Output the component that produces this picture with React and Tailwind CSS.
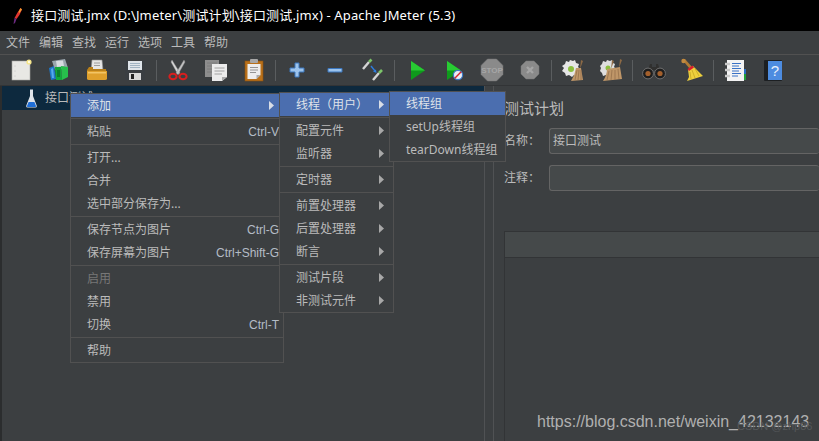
import React from "react";

const mainMenu = ["文件", "编辑", "查找", "运行", "选项", "工具", "帮助"];

const contextItems = [
  { label: "添加", arrow: true, active: true },
  "sep",
  { label: "粘贴", key: "Ctrl-V" },
  "sep",
  { label: "打开..." },
  { label: "合并" },
  { label: "选中部分保存为..." },
  "sep",
  { label: "保存节点为图片", key: "Ctrl-G" },
  { label: "保存屏幕为图片", key: "Ctrl+Shift-G" },
  "sep",
  { label: "启用", disabled: true },
  { label: "禁用" },
  { label: "切换", key: "Ctrl-T" },
  "sep",
  { label: "帮助" },
];

const addItems = [
  { label: "线程（用户）", arrow: true, active: true },
  "sep",
  { label: "配置元件", arrow: true },
  { label: "监听器", arrow: true },
  "sep",
  { label: "定时器", arrow: true },
  "sep",
  { label: "前置处理器", arrow: true },
  { label: "后置处理器", arrow: true },
  { label: "断言", arrow: true },
  "sep",
  { label: "测试片段", arrow: true },
  { label: "非测试元件", arrow: true },
];

const threadItems = [
  { label: "线程组", active: true },
  { label: "setUp线程组" },
  { label: "tearDown线程组" },
];

function Arrow({ active }) {
  return (
    <svg width="5" height="9" viewBox="0 0 5 9" className="shrink-0">
      <path d="M0 0L5 4.5L0 9Z" fill={active ? "#d8dde6" : "#a8a8a8"} />
    </svg>
  );
}

function Menu({ items, className }) {
  return (
    <div className={`absolute flex flex-col border border-[#515151] bg-[#3c3f41] text-[12px] text-[#bbbbbb] ${className}`}>
      {items.map((item, i) =>
        item === "sep" ? (
          <div key={i} className="flex h-[3px] items-center">
            <div className="h-px w-full bg-[#515151]" />
          </div>
        ) : (
          <div
            key={i}
            className={`flex h-[23px] items-center justify-between pl-4 ${item.arrow ? "pr-[9px]" : "pr-[4px]"} ${item.active ? "bg-[#4b6eaf] text-[#dfe3ea]" : ""} ${item.disabled ? "text-[#777777]" : ""}`}
          >
            <span>{item.label}</span>
            {item.key && <span className="font-['Liberation_Sans',sans-serif] text-[#b4bcc6]">{item.key}</span>}
            {item.arrow && <Arrow active={item.active} />}
          </div>
        )
      )}
    </div>
  );
}

const icons = {
  file: (
    <>
      <rect x="3" y="3" width="18" height="19" fill="#e8e8e4" stroke="#a5a5a0" strokeWidth="0.6" />
      <circle cx="20" cy="4" r="2.6" fill="#f5e58a" />
      <circle cx="20" cy="4" r="1.2" fill="#fffde0" />
      <circle cx="6" cy="8" r="0.5" fill="#bbb" />
      <circle cx="6" cy="13" r="0.5" fill="#bbb" />
      <circle cx="6" cy="18" r="0.5" fill="#bbb" />
    </>
  ),
  template: (
    <>
      <path d="M5 3L18 1L21 10L8 12Z" fill="#9aa6ad" />
      <path d="M9 3L16 2.5L17 8L10 9Z" fill="#d7dcdf" />
      <path d="M2 10L7 8L9 21L4 22Z" fill="#1f78c8" />
      <path d="M4 11L6 10L7 20L5 20Z" fill="#55a9ea" />
      <path d="M8 9L14 9L15 22L9 22Z" fill="#11a83a" />
      <path d="M14 8L21 9L21 19L15 22Z" fill="#27c04c" />
      <path d="M10 12L13 12L13 19L10 19Z" fill="#0b7f2b" />
    </>
  ),
  open: (
    <>
      <path d="M7 2H17L18 12H6Z" fill="#e6e6e6" stroke="#8f8f8f" strokeWidth="0.6" />
      <path d="M9 5H15M9 7.5H15" stroke="#8a8a8a" strokeWidth="0.8" />
      <path d="M2 12L4 9H8V11H21L22 21H2Z" fill="#b9801a" />
      <path d="M2 13H22V20.5Q22 22 20 22H4Q2 22 2 20.5Z" fill="#dfa02c" />
      <path d="M3 14H21V15.5H3Z" fill="#f3c565" />
    </>
  ),
  save: (
    <>
      <path d="M2 3H21L22 4V22H2Z" fill="#3a3e42" />
      <rect x="5" y="3" width="14" height="9" fill="#dfe5ea" />
      <path d="M7 5.5H17M7 7.5H17M7 9.5H17" stroke="#8fa6b7" strokeWidth="0.8" />
      <rect x="6" y="15" width="12" height="7" fill="#d9d9d9" />
      <rect x="8" y="16" width="3" height="5" fill="#222" />
    </>
  ),
  cut: (
    <>
      <path d="M6 2L14 15L12 16.5L5 4Z" fill="#d5d5d5" stroke="#8a8a8a" strokeWidth="0.4" />
      <path d="M18 2L10 15L12 16.5L19 4Z" fill="#c2c2c2" stroke="#8a8a8a" strokeWidth="0.4" />
      <ellipse cx="7" cy="18.5" rx="3.6" ry="2.8" fill="none" stroke="#d81f1f" strokeWidth="2" />
      <ellipse cx="17" cy="18.5" rx="3.6" ry="2.8" fill="none" stroke="#d81f1f" strokeWidth="2" />
    </>
  ),
  copy: (
    <>
      <rect x="1" y="2" width="14" height="17" fill="#8d8d8d" />
      <path d="M3 5H13M3 8H13M3 11H13M3 14H13" stroke="#787878" strokeWidth="0.8" />
      <path d="M8 6H23V19L18 23H8Z" fill="#ececec" />
      <path d="M23 19L18 23V19Z" fill="#aaa" />
      <path d="M10.5 10H20.5M10.5 13H20.5M10.5 16H18" stroke="#9a9a9a" strokeWidth="0.9" />
    </>
  ),
  paste: (
    <>
      <rect x="3" y="3" width="18" height="20" fill="#b8701a" stroke="#8c5210" strokeWidth="0.6" />
      <rect x="8" y="1" width="8" height="4" rx="1" fill="#a8a8a8" />
      <path d="M5.5 6H18.5V17L14.5 21H5.5Z" fill="#ededed" />
      <path d="M18.5 17L14.5 21V17Z" fill="#aaa" />
      <path d="M8 9.5H16M8 12H16M8 14.5H14" stroke="#8a8a8a" strokeWidth="0.9" />
    </>
  ),
  plus: (
    <path d="M10 5H14V10H19V14H14V19H10V14H5V10H10Z" fill="#9cc3ec" stroke="#3b76bd" strokeWidth="1" />
  ),
  minus: <path d="M5 10.5H19V14H5Z" fill="#9cc3ec" stroke="#3b76bd" strokeWidth="1" />,
  toggle: (
    <>
      <path d="M2 11L8 4" stroke="#d4d4d4" strokeWidth="2.4" />
      <path d="M8 4L10.5 1.5" stroke="#7cc46a" strokeWidth="2.6" />
      <path d="M12 22L18 15" stroke="#d4d4d4" strokeWidth="2.4" />
      <path d="M18 15L21 12" stroke="#7cc46a" strokeWidth="2.6" />
      <path d="M10 8L14.5 13.5" stroke="#2d7de0" strokeWidth="1.4" />
      <path d="M15.5 15L12 13.5L15 11.5Z" fill="#2d7de0" />
    </>
  ),
  start: (
    <>
      <path d="M7 3L21 12.5L7 22Z" fill="#0f9a1c" />
      <path d="M7 3L21 12.5L7 12.5Z" fill="#28cc33" />
    </>
  ),
  startNoPause: (
    <>
      <path d="M5 3L19 12.5L5 22Z" fill="#0f9a1c" />
      <path d="M5 3L19 12.5L5 12.5Z" fill="#28cc33" />
      <circle cx="16" cy="17" r="4.6" fill="#e9eef5" stroke="#3a78c8" strokeWidth="1.2" />
      <path d="M12.8 20.2L19.2 13.8" stroke="#d8232a" strokeWidth="1.4" />
    </>
  ),
  stop: (
    <>
      <path d="M7.5 1H16.5L23 7.5V16.5L16.5 23H7.5L1 16.5V7.5Z" fill="#8a8a8a" stroke="#777" strokeWidth="0.5" />
      <text x="12" y="15" textAnchor="middle" fontSize="8" fontWeight="700" fontFamily="Liberation Sans, sans-serif" fill="#a6a6a6">STOP</text>
    </>
  ),
  shutdown: (
    <>
      <path d="M8 3H16L21 8V16L16 21H8L3 16V8Z" fill="#8a8a8a" stroke="#777" strokeWidth="0.5" />
      <path d="M9 9L15 15M15 9L9 15" stroke="#a5a5a5" strokeWidth="2.4" />
    </>
  ),
  clear: (
    <>
      <path d="M9 2L12 3L14 2L15 5L18 6L17 9L19 11L17 14L17 17H13L11 19L8 17L5 18L4 15L1 13L3 10L1 8L4 6L5 3L8 4Z" fill="#e6e6e6" />
      <circle cx="10" cy="11" r="3" fill="#8cbf3f" />
      <path d="M20 2L22 3L19 11Z" fill="#8d6a45" />
      <path d="M15 10L20 10L22 22L10 23Q14 17 15 10Z" fill="#bf9668" />
      <path d="M16 12L14 22M18 12L17 22M20 12L20 22" stroke="#8f6c47" strokeWidth="0.7" />
    </>
  ),
  clearAll: (
    <>
      <path d="M8 2L11 3L13 2L14 5L16 6L15 9L17 11L15 14L11 18L7 17L4 18L3 15L1 13L2 10L1 8L3 6L4 3L7 4Z" fill="#dedede" />
      <circle cx="9" cy="10" r="2.5" fill="#8cbf3f" />
      <path d="M13 2L15 3L12 11Z" fill="#8d6a45" />
      <path d="M21 1L23 2L20 10Z" fill="#8d6a45" />
      <path d="M8 11L21 9L23 21L4 23Q8 17 8 11Z" fill="#bf9668" />
      <path d="M10 13L8 22M13 12L12 22M16 12L16 22M19 11L20 21" stroke="#8f6c47" strokeWidth="0.7" />
    </>
  ),
  search: (
    <>
      <path d="M8 6H10V9H14V6H16L18 12H6Z" fill="#30302f" />
      <circle cx="6" cy="15.5" r="5.4" fill="#1e1e1e" stroke="#7d7d7d" strokeWidth="0.8" />
      <circle cx="18" cy="15.5" r="5.4" fill="#1e1e1e" stroke="#7d7d7d" strokeWidth="0.8" />
      <circle cx="6" cy="15.5" r="2.6" fill="#a4602c" />
      <circle cx="18" cy="15.5" r="2.6" fill="#a4602c" />
    </>
  ),
  reset: (
    <>
      <path d="M2 1.5L5 1L12 9L9.5 10.5Z" fill="#b07a35" />
      <circle cx="3.5" cy="3" r="2.2" fill="#c18a3f" />
      <path d="M8 11.5L13 8L23 18L7 23L9 19Z" fill="#edd03d" />
      <path d="M12 12L15 20M10 14L11 21M15 10.5L19 18" stroke="#bfa020" strokeWidth="0.7" />
      <path d="M7.5 11L12.5 7.5L14 9.5L9 13Z" fill="#d81e2c" />
    </>
  ),
  log: (
    <>
      <rect x="4" y="2" width="17" height="21" fill="#f3f3f3" />
      <rect x="21" y="11" width="2" height="5" fill="#2a6fc2" />
      <rect x="21" y="16" width="2" height="6" fill="#1ea03a" />
      <path d="M9 5.5H18M9 8H16M9 10.5H18M9 13H16M9 15.5H18M9 18H15" stroke="#3a72c6" strokeWidth="1" />
      <path d="M2 6H7M2 12H7M2 18H7" stroke="#c9c9c9" strokeWidth="2.4" />
    </>
  ),
  help: (
    <>
      <rect x="3" y="2" width="18" height="21" rx="1" fill="#1c1f22" />
      <rect x="7" y="3" width="14" height="19" fill="#4d8ce0" />
      <text x="14" y="18" textAnchor="middle" fontSize="15" fontFamily="Liberation Sans, sans-serif" fill="#e8f0fb">?</text>
    </>
  ),
};

const toolbar = [
  ["file", "template", "open", "save"],
  ["cut", "copy", "paste"],
  ["plus", "minus", "toggle"],
  ["start", "startNoPause", "stop", "shutdown"],
  ["clear", "clearAll"],
  ["search", "reset"],
  ["log", "help"],
];

function ToolIcon({ name }) {
  return (
    <div className="flex w-[38px] items-center justify-center">
      <svg width="24" height="24" viewBox="0 0 24 24">
        {icons[name]}
      </svg>
    </div>
  );
}

function Flask() {
  return (
    <svg width="11" height="19" viewBox="0 0 11 19" className="shrink-0">
      <path d="M4 .5H7V7L10.7 16.5Q11.2 18.5 9.5 18.5H1.5Q-.2 18.5 .3 16.5L4 7Z" fill="#dfe4ea" />
      <path d="M2.6 13H8.4L10 17Q10.3 18 9.2 18H1.8Q.7 18 1 17Z" fill="#1f6fd8" />
    </svg>
  );
}

function Pen() {
  return (
    <svg width="9" height="16" viewBox="0 0 9 16">
      <path d="M7.5 0L9 1.5Q7 7 3.5 11L1.5 10Q4 5 7.5 0Z" fill="#e0352f" />
      <path d="M7.5 0L9 1.5L6.5 5L5.5 4Z" fill="#f39a2e" />
      <path d="M1.5 10L3.5 11L2 15L.5 16Z" fill="#6b2a80" />
    </svg>
  );
}

export default function App() {
  return (
    <div className="relative flex h-[441px] w-[819px] flex-col overflow-hidden bg-[#3c3f41] font-['Noto_Sans','Noto_Sans_CJK_SC',sans-serif] text-[12px] text-[#bbbbbb]">
      {/* title bar */}
      <div className="flex h-[31px] shrink-0 items-center gap-[9px] bg-black pl-[13px] text-[13px] tracking-[0.15px] text-white">
        <Pen />
        <span>接口测试.jmx (D:\Jmeter\测试计划\接口测试.jmx) - Apache JMeter (5.3)</span>
      </div>

      {/* menu bar */}
      <div className="flex h-[24px] shrink-0 items-center gap-[9px] border-b border-[#515151] pl-[6px]">
        {mainMenu.map((m) => (
          <span key={m} className="text-[#bbbbbb]">{m}</span>
        ))}
      </div>

      {/* toolbar */}
      <div className="flex h-[31px] shrink-0 items-stretch border-b border-[#323436] pl-[2px]">
        {toolbar.map((group, i) => (
          <React.Fragment key={i}>
            {i > 0 && (
              <div className="flex w-[5px] items-center justify-center">
                <div className="h-[21px] w-px bg-[#5a5d5f]" />
              </div>
            )}
            {group.map((name) => (
              <ToolIcon key={name} name={name} />
            ))}
          </React.Fragment>
        ))}
      </div>

      {/* body */}
      <div className="flex min-h-0 flex-1">
        <div className="w-[485px] shrink-0 border-r border-l-2 border-r-[#505254] border-l-[#2b2d2e]">
          <div className="flex h-[24px] items-center gap-[8px] bg-[#0d293e] pl-[24px]">
            <Flask />
            <span>接口测试</span>
          </div>
        </div>
        <div className="w-[9px] shrink-0 border-r border-[#505254]" />
        <div className="flex min-w-0 flex-1 flex-col pl-[10px]">
          <div className="mt-[13px] text-[15px] leading-[18px] text-[#bbbbbb]">测试计划</div>
          <div className="mt-[11px] flex flex-col gap-[11px]">
            {[["名称：", "接口测试"], ["注释：", ""]].map(([label, value]) => (
              <div key={label} className="flex items-center">
                <span className="w-[45px] shrink-0">{label}</span>
                <div className="flex h-[26px] flex-1 items-center rounded-[3px] border border-r-0 border-[#646464] bg-[#45494a] pl-[3px]">
                  {value}
                </div>
              </div>
            ))}
          </div>
          <div className="mt-[40px] flex flex-1 flex-col border-l border-t border-[#323436]">
            <div className="h-[26px] border-b border-[#323436] bg-[#45494a]" />
          </div>
        </div>
      </div>

      {/* popup menus */}
      <Menu items={contextItems} className="left-[70px] top-[93px] w-[214px]" />
      <Menu items={addItems} className="left-[279px] top-[92px] w-[115px]" />
      <Menu items={threadItems} className="left-[389px] top-[91px] w-[117px]" />

      {/* watermark */}
      <div className="absolute left-[537px] top-[410px] font-['Liberation_Sans',sans-serif] text-[16px] text-[#b0b0b0]">
        https://blog.csdn.net/weixin_42132143
      </div>
      <div className="absolute left-[737px] top-[418px] font-['Liberation_Sans',sans-serif] text-[11px] text-[#55585a]">
        CSDN @zhp86
      </div>
    </div>
  );
}
